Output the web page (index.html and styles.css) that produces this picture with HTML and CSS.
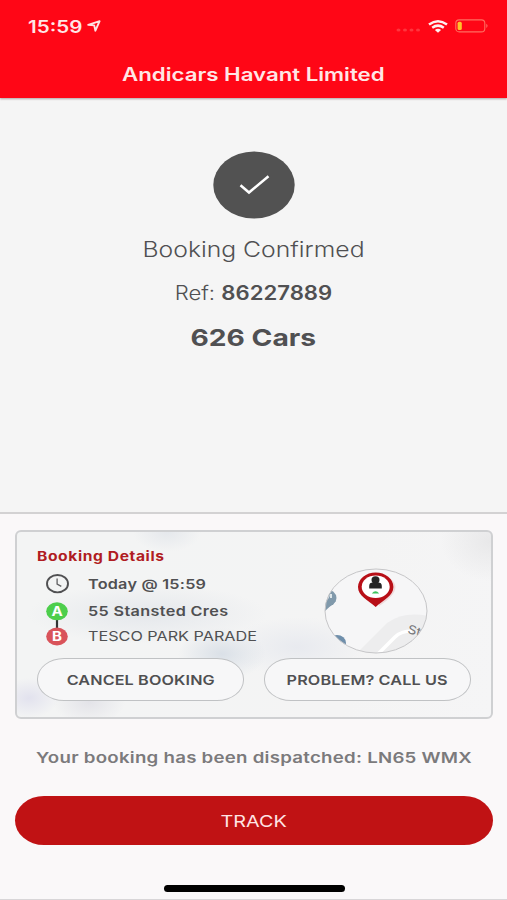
FILE: index.html
```
<!DOCTYPE html>
<html lang="en">
<head>
  <meta charset="UTF-8">
  <meta name="viewport" content="width=device-width, initial-scale=1.0">
  <title>Booking Confirmed</title>
  <link rel="stylesheet" href="styles.css">
</head>
<body>

  <header class="header">
    <div class="status-bar">
      <span class="text time">15:59</span>
      <svg class="location" width="14" height="12" viewBox="0 0 14 12">
        <path d="M1.2 4.9 L12.6 1.2 L8.4 10.7 L7.2 5.4 Z" fill="none" stroke="#ffe3e3" stroke-width="1.9" stroke-linejoin="round"/>
      </svg>
      <svg class="signal" width="25" height="4" viewBox="0 0 25 4">
        <g fill="#ff353e">
          <ellipse cx="2.5" cy="2" rx="2" ry="1.5"/>
          <ellipse cx="9" cy="2" rx="2" ry="1.5"/>
          <ellipse cx="15.5" cy="2" rx="2" ry="1.5"/>
          <ellipse cx="22" cy="2" rx="2" ry="1.5"/>
        </g>
      </svg>
      <svg class="wifi" width="20" height="13" viewBox="0 0 20 13">
        <g fill="none" stroke="#fff0f0" stroke-width="2.5">
          <path d="M1 4.6 Q10 -2 19 4.6"/>
          <path d="M4.2 7.8 Q10 3.4 15.8 7.8"/>
        </g>
        <path d="M6.9 10 Q10 7.4 13.1 10 L10 12.8 Z" fill="#fff0f0"/>
      </svg>
      <svg class="battery" width="34" height="14" viewBox="0 0 34 14">
        <rect x="0.8" y="0.9" width="29" height="12" rx="3.4" fill="none" stroke="#ff6e60" stroke-width="1.1"/>
        <rect x="2.6" y="2.7" width="4.2" height="8.4" rx="1.5" fill="#ffc32a"/>
        <path d="M31.4 4.8 Q33.6 6.9 31.4 9 Z" fill="#ff7a70"/>
      </svg>
    </div>
    <h1 class="text title">Andicars Havant Limited</h1>
  </header>

  <main class="confirmation">
    <svg class="check" width="82" height="68" viewBox="0 0 82 68">
      <ellipse cx="41" cy="34" rx="40.7" ry="33.6" fill="#525252"/>
      <path d="M27.5 34.2 L36 41.5 L55.5 25.2" fill="none" stroke="#fff" stroke-width="2.5"/>
    </svg>
    <h2 class="text confirmed">Booking Confirmed</h2>
    <p class="text ref">Ref: <b>86227889</b></p>
    <p class="text cars">626 Cars</p>
  </main>

  <section class="bottom">
    <div class="card">
      <h3 class="text card-title">Booking Details</h3>
      <div class="details">
        <svg class="route" width="24" height="76" viewBox="0 0 24 76">
          <ellipse cx="12.5" cy="12.7" rx="10.5" ry="8.7" fill="none" stroke="#505052" stroke-width="1.9"/>
          <path d="M12.1 7.5 V13.1 L16.3 15.4" fill="none" stroke="#606062" stroke-width="1.3"/>
          <path d="M12 45 V57" stroke="#333" stroke-width="2.2"/>
          <ellipse cx="12" cy="40.3" rx="10.8" ry="9" fill="#4dce4c"/>
          <ellipse cx="12" cy="65.5" rx="10.8" ry="9" fill="#d9535a"/>
          <g class="stop" fill="#fff" text-anchor="middle">
            <text transform="translate(12 45.1) scale(1.16 1)">A</text>
            <text transform="translate(12 70.2) scale(1.16 1)">B</text>
          </g>
        </svg>
        <div class="lines">
          <p class="text line when">Today @ 15:59</p>
          <p class="text line from">55 Stansted Cres</p>
          <p class="text line to">TESCO PARK PARADE</p>
        </div>
        <svg class="map" width="104" height="86" viewBox="0 0 104 86">
          <defs>
            <clipPath id="mapClip"><ellipse cx="52" cy="43" rx="51" ry="42"/></clipPath>
          </defs>
          <g clip-path="url(#mapClip)">
            <rect width="104" height="86" fill="#f6f6f7"/>
            <path d="M32 86 L63 55 Q80 43 104 48 V86 Z" fill="#ededee"/>
            <path d="M52 88 L71 69 Q77 63 88 63" fill="none" stroke="#fff" stroke-width="3.5"/>
            <ellipse cx="2" cy="30" rx="10.5" ry="9" fill="#8099ab"/>
            <path d="M-5 34 L12 33 L1 43 Z" fill="#8099ab"/>
            <path d="M3 31 L5 27 M7 30 V26" stroke="#dde6ea" stroke-width="2"/>
            <ellipse cx="13" cy="75" rx="9" ry="8" fill="#6f8fab"/>
            <text class="street" transform="translate(83 65) rotate(14) scale(1.15 1)">St</text>
          </g>
          <ellipse cx="52" cy="43" rx="51" ry="42" fill="none" stroke="#c6c6c8" stroke-width="1"/>
          <path d="M55 9 Q70 8 71.5 19 Q71 28 55 38 Z" fill="#efd9da"/>
          <path d="M34 19 A17.7 14.6 0 0 1 69.4 19 C69.4 28 59 32 51.7 39 C44 32 34 28 34 19 Z" fill="#b80f17"/>
          <ellipse cx="51.7" cy="18.8" rx="14" ry="11.3" fill="#fff"/>
          <ellipse cx="51.5" cy="12" rx="4" ry="3.7" fill="#252525"/>
          <path d="M45.2 20.6 V18 Q45.2 14.6 49 14.6 H54 Q57.8 14.6 57.8 18 V20.6 Z" fill="#252525"/>
          <path d="M47.8 25.6 Q51.5 21 55.2 25.6 Z" fill="#3cc45c"/>
        </svg>
      </div>
      <div class="actions">
        <button class="button"><span class="text">CANCEL BOOKING</span></button>
        <button class="button"><span class="text">PROBLEM? CALL US</span></button>
      </div>
    </div>
    <p class="text message">Your booking has been dispatched: LN65 WMX</p>
    <button class="track"><span class="text">TRACK</span></button>
    <div class="home-indicator"></div>
  </section>

</body>
</html>
```
FILE: styles.css
```
* {
  box-sizing: border-box;
}

body {
  margin: 0;
  height: 900px;
  display: flex;
  flex-direction: column;
  background-color: #f5f5f5;
  font-family: Inter, "Liberation Sans", sans-serif;
  color: #505052;
  overflow: hidden;
}

h1, h2, h3, p {
  margin: 0;
}

/* wide lettering */
.text {
  display: block;
  width: fit-content;
  white-space: nowrap;
  transform: scaleX(1.2);
}

.header {
  height: 98px;
  background-color: #ff0616;
  color: #ffe6e6;
  box-shadow: 0 1px 2px rgba(90, 60, 60, 0.45);
}

.status-bar {
  display: flex;
  align-items: center;
  height: 52px;
  padding: 0 18px 0 28px;
}

.time {
  width: 59px;
  font-size: 17px;
  font-weight: 600;
  line-height: 22px;
  padding-top: 1px;
  transform: scaleX(1.21);
  transform-origin: left;
}

.signal {
  margin: 8px 7px 0 auto;
}

.wifi {
  margin-right: 7px;
}

.title {
  margin: 0 auto;
  font-size: 18px;
  font-weight: 600;
  line-height: 45px;
  transform: scaleX(1.235);
}

.confirmation {
  height: 414px;
  padding-top: 53px;
  display: flex;
  flex-direction: column;
  align-items: center;
}

.confirmed {
  margin-top: 14px;
  font-size: 21.5px;
  font-weight: 350;
  line-height: 32px;
  transform: scaleX(1.15);
}

.ref {
  margin-top: 13px;
  font-size: 19.5px;
  font-weight: 350;
  line-height: 30px;
  transform: scaleX(1.135);
}

.ref b {
  font-weight: 600;
}

.cars {
  margin-top: 13px;
  font-size: 23.5px;
  font-weight: 700;
  line-height: 34px;
}

.bottom {
  flex: 1;
  display: flex;
  flex-direction: column;
  padding: 16px 14px 0 15px;
  border-top: 2px solid #d3d2d3;
  border-bottom: 1px solid #d8d6d8;
  background-color: #faf8f9;
}

.card {
  height: 189px;
  padding: 14px 20px 0;
  border: 2px solid #cfd0d2;
  border-radius: 6px;
  background:
    radial-gradient(ellipse 50px 40px at 100% 5%, #e8e8e9, transparent),
    radial-gradient(ellipse 34px 20px at 150px 0, #e5e8ec, transparent),
    radial-gradient(ellipse 120px 30px at 130px 82px, #e5e8ec, transparent),
    radial-gradient(ellipse 44px 26px at 205px 122px, #dae0e7, transparent),
    radial-gradient(ellipse 70px 30px at 280px 115px, #e8eaef, transparent),
    radial-gradient(ellipse 30px 20px at 12px 166px, #e2e2ee, transparent),
    radial-gradient(ellipse 36px 22px at 72px 170px, #e3e3e8, transparent),
    linear-gradient(100deg, #f3f4f4 20%, #f4f4f4 70%, #f5f5f6);
}

.card-title {
  font-size: 13px;
  font-weight: 700;
  line-height: 20px;
  letter-spacing: 0.5px;
  color: #b01c22;
  transform-origin: left;
}

.details {
  display: flex;
  height: 92px;
}

.route {
  margin: 5px 0 0 8px;
}

.stop {
  font-size: 13px;
  font-weight: 700;
}

.lines {
  width: 255px;
  padding: 5px 0 0 19px;
  margin-right: 0;
}

.line {
  font-size: 13.5px;
  font-weight: 600;
  line-height: 26px;
  letter-spacing: 0.3px;
  transform-origin: left;
}

.when {
  line-height: 27px;
  letter-spacing: 0.2px;
}

.to {
  font-weight: 400;
  line-height: 25px;
  letter-spacing: 0;
}

.map {
  flex-shrink: 0;
  margin-top: 2px;
}

.street {
  font-size: 12px;
  fill: #77787a;
}

.actions {
  display: flex;
  gap: 20px;
}

.button {
  display: flex;
  justify-content: center;
  align-items: center;
  width: 208px;
  height: 43px;
  padding: 0;
  border: 1px solid #c0c2c4;
  border-radius: 27px / 21px;
  background-color: #f7f7f8;
  color: #505052;
  font-family: inherit;
  font-size: 13.5px;
  font-weight: 600;
  letter-spacing: 0.1px;
}

.message {
  margin: 24px auto 0;
  font-size: 15px;
  font-weight: 600;
  line-height: 30px;
  letter-spacing: 0.2px;
  color: #7b7a7c;
  transform: scaleX(1.245);
}

.track {
  display: flex;
  justify-content: center;
  align-items: center;
  height: 49px;
  margin-top: 23px;
  padding: 0;
  border: none;
  border-radius: 29px / 24.5px;
  background-color: #c01214;
  color: #ffe4e4;
  font-family: inherit;
  font-size: 16.5px;
}

.home-indicator {
  width: 181px;
  height: 7px;
  margin: 40px auto 0;
  border-radius: 4px;
  background-color: #000;
}
```
